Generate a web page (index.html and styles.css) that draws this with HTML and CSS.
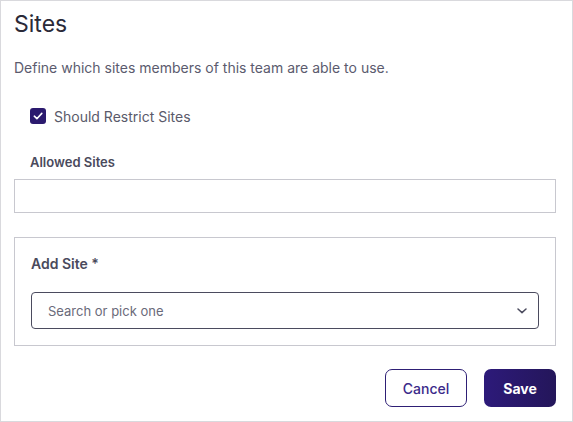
FILE: index.html
```html
<!DOCTYPE html>
<html lang="en">
<head>
<meta charset="utf-8">
<title>Sites</title>
<link rel="stylesheet" href="styles.css">
</head>
<body>
<div class="dialog">
  <h1 class="title">Sites</h1>
  <p class="desc">Define which sites members of this team are able to use.</p>
  <label class="check-row">
    <span class="checkbox">
      <svg width="12" height="12" viewBox="0 0 12 12"><path d="M2.3 6.2 L4.9 8.7 L9.8 3.4" fill="none" stroke="#fff" stroke-width="1.6" stroke-linecap="round" stroke-linejoin="round"/></svg>
    </span>
    <span class="check-label">Should Restrict Sites</span>
  </label>
  <div class="field-label">Allowed Sites</div>
  <div class="input-box"></div>
  <div class="panel">
    <div class="panel-label">Add Site *</div>
    <div class="select">
      <span class="placeholder">Search or pick one</span>
      <svg class="chev" width="10" height="6" viewBox="0 0 10 6"><path d="M1 1 L5 4.6 L9 1" fill="none" stroke="#4b4b5e" stroke-width="1.5" stroke-linecap="round" stroke-linejoin="round"/></svg>
    </div>
  </div>
  <div class="actions">
    <button class="btn btn-cancel">Cancel</button>
    <button class="btn btn-save">Save</button>
  </div>
</div>
</body>
</html>
```
FILE: styles.css
```css
html, body {
  margin: 0;
  padding: 0;
  background: #ffffff;
}
body {
  font-family: Inter, "Noto Sans", sans-serif;
}
.dialog {
  box-sizing: border-box;
  width: 573px;
  height: 422px;
  border: 1px solid #d9d9dd;
  padding: 9px 16px 0 13px;
  display: flex;
  flex-direction: column;
}
.title {
  margin: 0;
  font-size: 23px;
  line-height: 28px;
  font-weight: 400;
  color: #2a2a38;
}
.desc {
  margin: 20px 0 0 0;
  font-size: 14px;
  line-height: 20px;
  color: #5b5b6e;
}
.check-row {
  margin: 28px 0 0 16px;
  display: flex;
  align-items: center;
  gap: 8px;
  height: 20px;
}
.checkbox {
  width: 16px;
  height: 16px;
  border-radius: 3px;
  background: #2b1a6e;
  display: flex;
  align-items: center;
  justify-content: center;
}
.check-label {
  font-size: 14px;
  color: #5a5a6a;
}
.field-label {
  margin: 27px 0 0 16px;
  font-size: 13px;
  line-height: 18px;
  font-weight: 600;
  color: #4a4a5c;
}
.input-box {
  margin-top: 8px;
  height: 34px;
  box-sizing: border-box;
  border: 1px solid #c8c8cf;
}
.panel {
  margin-top: 24px;
  box-sizing: border-box;
  height: 109px;
  border: 1px solid #c8c8cf;
  padding: 16px 16px 0 16px;
}
.panel-label {
  font-size: 14px;
  line-height: 20px;
  font-weight: 600;
  color: #4a4a5c;
}
.select {
  margin-top: 18px;
  box-sizing: border-box;
  height: 37px;
  border: 1px solid #4b4b5e;
  border-radius: 4px;
  display: flex;
  align-items: center;
  justify-content: space-between;
  padding: 0 11px 0 16px;
}
.placeholder {
  font-size: 13px;
  color: #6a6a7a;
}
.actions {
  margin-top: 23px;
  display: flex;
  justify-content: flex-end;
  gap: 17px;
}
.btn {
  box-sizing: border-box;
  height: 38px;
  border-radius: 7px;
  font-family: Inter, "Noto Sans", sans-serif;
  font-size: 14px;
  font-weight: 600;
  padding: 0;
  cursor: pointer;
}
.btn-cancel {
  width: 82px;
  background: #ffffff;
  border: 1px solid #2e1f75;
  color: #3b2a8a;
  font-weight: 500;
}
.btn-save {
  width: 72px;
  border: none;
  color: #ffffff;
  font-weight: 700;
  background: linear-gradient(90deg, #2d1a7a 0%, #24165a 100%);
}
```
